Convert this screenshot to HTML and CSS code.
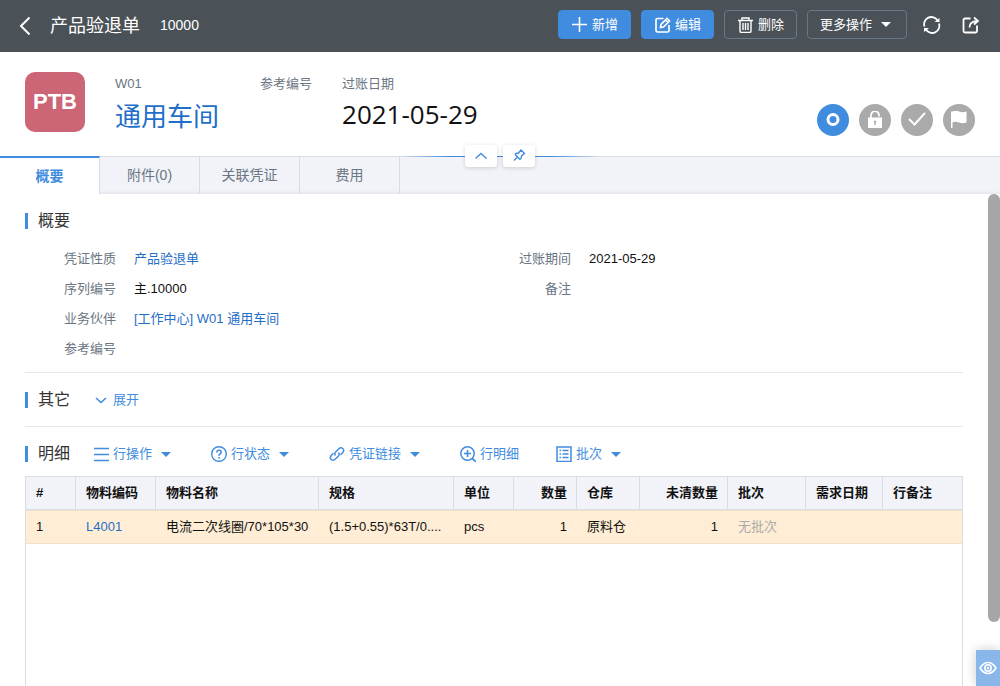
FILE: index.html
```
<!DOCTYPE html>
<html lang="zh-CN">
<head>
<meta charset="utf-8">
<meta name="viewport" content="width=device-width, initial-scale=1">
<title>产品验退单 10000</title>
<link rel="stylesheet" href="styles.css">
</head>
<body>
<header class="topbar">
  <button class="icon-btn back" aria-label="返回"><svg class="icon" viewBox="0 0 16 20"><path d="M12.500 2.500 4 11l8.500 8.500" stroke-width="2"/></svg></button>
  <h1 class="doc-title">产品验退单</h1>
  <span class="doc-no">10000</span>
  <div class="actions">
    <button class="btn primary"><svg class="icon" viewBox="0 0 16 16"><path d="M7.500 0v15M0 7.500h15" stroke-width="1.600"/></svg>新增</button>
    <button class="btn primary"><svg class="icon" viewBox="0 0 16 16"><path d="M8.500 1.500H2.500Q1 1.500 1 3v10.500Q1 15 2.500 15h10q1.500 0 1.500-1.500V8M5.500 10.500l.5-3 6-6 2.500 2.500-6 6zM10.500 3l2.500 2.500" stroke-width="1.700"/></svg>编辑</button>
    <button class="btn"><svg class="icon" viewBox="0 0 16 16"><path d="M0 3.500h15M4 3.500v-2.500h7v2.500M2 3.500V14q0 1.500 1.500 1.500h8q1.500 0 1.500-1.500V3.500M5 6v7M7.500 6v7M10 6v7" stroke-width="1.400"/></svg>删除</button>
    <button class="btn more">更多操作<span class="caret"></span></button>
  </div>
  <button class="icon-btn" aria-label="刷新"><svg class="icon" viewBox="0 0 18 18"><path d="M1.500 10.500A7.200 7.200 0 0 1 14.500 4.500M16 7.500A7.200 7.200 0 0 1 3 13.500" stroke-width="1.800"/><path d="M11.500 6h5V2zM6 12H1V16z" fill="currentColor" stroke="none"/></svg></button>
  <button class="icon-btn" aria-label="分享"><svg class="icon" viewBox="0 0 18 18"><path d="M8.500 2.500H3Q1.500 2.500 1.500 4v11q0 1.500 1.500 1.500h10.500q1.500 0 1.500-1.500V9.500M7.500 11.500Q7.500 5.500 15 5M12 1.500 16 5l-4 3.500" stroke-width="1.800"/></svg></button>
</header>

<section class="hero">
  <div class="badge">PTB</div>
  <dl class="facts">
    <div class="fact partner"><dt>W01</dt><dd><a href="#partner">通用车间</a></dd></div>
    <div class="fact"><dt>参考编号</dt><dd></dd></div>
    <div class="fact"><dt>过账日期</dt><dd class="date">2021-05-29</dd></div>
  </dl>
  <div class="statuses">
    <button class="status on" aria-label="状态"><svg class="icon" viewBox="0 0 18 18"><circle cx="9" cy="8.500" r="5" stroke-width="3"/></svg></button>
    <button class="status" aria-label="解锁"><svg class="icon" viewBox="0 0 18 18"><path d="M5 7V4.500a4 4 0 0 1 8-.5v1.500" stroke-width="1.700"/><path d="M2 6.500h14v10.500H2zM9 9.500a1.300 1.300 0 0 0-.7 2.300V14h1.400V11.800A1.300 1.300 0 0 0 9 9.500z" fill="currentColor" fill-rule="evenodd" stroke="none"/></svg></button>
    <button class="status" aria-label="审核"><svg class="icon" viewBox="0 0 18 18"><path d="m1 8 5.500 5.500L17 2" stroke-width="2"/></svg></button>
    <button class="status" aria-label="标记"><svg class="icon" viewBox="0 0 18 18"><path d="M1 .5h1.500q3-1.500 6.500 0t7.500 0v11q-4 1.500-7.500 0t-6.500 0v5.500H1z" fill="currentColor" stroke="none"/></svg></button>
  </div>
</section>

<div class="tabs-wrap">
  <nav class="tabs">
    <a class="tab active" href="#summary">概要</a>
    <a class="tab" href="#files">附件(0)</a>
    <a class="tab" href="#vouchers">关联凭证</a>
    <a class="tab" href="#fees">费用</a>
  </nav>
  <div class="handle">
    <button class="handle-btn" aria-label="收起"><svg class="icon" viewBox="0 0 16 16"><path d="m2.500 10.500 5.500-5 5.500 5" stroke-width="1.300"/></svg></button>
    <button class="handle-btn" aria-label="固定"><svg class="icon" viewBox="0 0 16 16"><path d="m9.500 1.500 4.500 4.500M10 2 7.500 5 5 5.500q-1 .5-.5 1.500l4 4q1 .5 1.500-.5L10.500 8l3-2.500M6.300 9.200 3 12.500" stroke-width="1.400"/></svg></button>
  </div>
</div>

<main class="content">
  <section class="block" id="summary">
    <div class="block-head"><h2>概要</h2></div>
    <dl class="fields">
      <div class="field"><dt>凭证性质</dt><dd><a href="#type">产品验退单</a></dd></div>
      <div class="field"><dt>过账期间</dt><dd>2021-05-29</dd></div>
      <div class="field"><dt>序列编号</dt><dd>主.10000</dd></div>
      <div class="field"><dt>备注</dt><dd></dd></div>
      <div class="field"><dt>业务伙伴</dt><dd><a href="#partner">[工作中心] W01 通用车间</a></dd></div>
      <div class="field"></div>
      <div class="field"><dt>参考编号</dt><dd></dd></div>
    </dl>
  </section>

  <section class="block">
    <div class="block-head"><h2>其它</h2>
      <button class="tool"><svg class="icon" viewBox="0 0 16 16"><path d="m3 6 5 4.500L13 6" stroke-width="1.600"/></svg>展开</button>
    </div>
  </section>

  <section class="block details">
    <div class="block-head"><h2>明细</h2>
      <button class="tool"><svg class="icon" viewBox="0 0 16 16"><path d="M1 2.500h15M1 8.500h15M1 14.500h15" stroke-width="1.600"/></svg>行操作<span class="caret"></span></button>
      <button class="tool"><svg class="icon" viewBox="0 0 16 16"><circle cx="8" cy="8" r="7.300" stroke-width="1.400"/><path d="M5.800 6.500Q5.800 4.300 8 4.300t2.200 2Q10.200 7.300 9 8T8 9.800" stroke-width="1.500"/><path d="M7.200 11h1.600v1.500H7.200z" fill="currentColor" stroke="none"/></svg>行状态<span class="caret"></span></button>
      <button class="tool"><svg class="icon" viewBox="0 0 16 16"><path d="M6.500 9.500Q5 7.500 6.800 5.700L9.800 2.700Q11.800 1 13.700 2.500T13.800 6.500L11.500 8.800M9.500 6.500Q11 8.500 9.200 10.300L6.200 13.300Q4.200 15 2.300 13.500T2.200 9.500L4.500 7.200" stroke-width="1.500"/></svg>凭证链接<span class="caret"></span></button>
      <button class="tool plain"><svg class="icon" viewBox="0 0 16 16"><circle cx="7.500" cy="7.500" r="6.700" stroke-width="1.500"/><path d="M7.500 4v7M4 7.500h7" stroke-width="1.600"/><path d="m12 12 4 4" stroke-width="1.800"/></svg>行明细</button>
      <button class="tool"><svg class="icon" viewBox="0 0 16 16"><path d="M1 1h14v14.500H1z" stroke-width="1.500"/><path d="M3.500 4.500H5M6.500 4.500h6M3.500 8H5M6.500 8h6M3.500 11.500H5M6.500 11.500h6" stroke-width="1.300"/></svg>批次<span class="caret"></span></button>
    </div>
    <div class="grid">
      <table>
        <colgroup><col class="w50"><col class="w80"><col class="w163"><col class="w135"><col class="w60"><col class="w63"><col class="w63"><col class="w88"><col class="w78"><col class="w77"><col></colgroup>
        <thead><tr><th>#</th><th>物料编码</th><th>物料名称</th><th>规格</th><th>单位</th><th class="num">数量</th><th>仓库</th><th class="num">未清数量</th><th>批次</th><th>需求日期</th><th>行备注</th></tr></thead>
        <tbody><tr><td>1</td><td><a href="#item">L4001</a></td><td>电流二次线圈/70*105*30</td><td>(1.5+0.55)*63T/0....</td><td>pcs</td><td class="num">1</td><td>原料仓</td><td class="num">1</td><td class="muted">无批次</td><td></td><td></td></tr></tbody>
      </table>
    </div>
  </section>
  <div class="scroll-thumb"></div>
  <button class="preview" aria-label="预览"><svg class="icon" viewBox="0 0 18 14"><path d="M1 7q3.500-5.500 8-5.500T17 7q-3.500 5.500-8 5.500T1 7z" stroke-width="1.600"/><circle cx="9" cy="7" r="3.200" stroke-width="1.500"/><circle cx="9" cy="7" r="1.200" fill="currentColor" stroke="none"/></svg></button>
</main>
</body>
</html>
```
FILE: styles.css
```
:root {
  --blue: #408cde;
  --link: #1f6ec8;
  --label: #6b7683;
  --line: #d8dce3;
  --panel: #f1f3f8;
}

* { box-sizing: border-box; }

body {
  margin: 0;
  height: 100vh;
  display: flex;
  flex-direction: column;
  overflow: hidden;
  background: #fff;
  color: #111;
  font: 13px/20px "Liberation Sans", "Noto Sans CJK SC", sans-serif;
}

button {
  font: inherit;
  color: inherit;
  background: none;
  border: 0;
  padding: 0;
  cursor: pointer;
}

a { color: var(--link); text-decoration: none; }
h1, h2, dl, dd { margin: 0; font-weight: normal; }

.icon {
  width: 16px;
  height: 16px;
  flex: none;
  display: block;
  fill: none;
  stroke: currentColor;
}

.caret {
  border: 5px solid transparent;
  border-top-color: currentColor;
  border-bottom: 0;
}

/* Top bar */
.topbar {
  flex: none;
  display: flex;
  align-items: center;
  height: 52px;
  padding: 0 20px 3px 17px;
  background: #4a5157;
  color: #fff;
}
.icon-btn { margin-left: 21px; }
.icon-btn .icon { width: 18px; height: 18px; }
.icon-btn.back { margin-left: 0; }
.icon-btn.back .icon { width: 16px; height: 20px; }
.doc-title { margin-left: 17px; font-size: 18px; line-height: 30px; padding-top: 3px; }
.doc-no { margin-left: 20px; padding-top: 1px; font-size: 14px; }
.actions { margin-left: auto; display: flex; gap: 10px; }
.actions + .icon-btn { margin-left: 16px; }
.btn {
  display: flex;
  align-items: center;
  gap: 4px;
  height: 29px;
  padding: 0 12px 0 13px;
  border: 1px solid #677889;
  border-radius: 4px;
}
.btn.primary { background: var(--blue); border-color: var(--blue); }
.btn.more { gap: 9px; padding: 0 15px 0 12px; }

/* Document summary */
.hero {
  flex: none;
  display: flex;
  align-items: flex-start;
  padding: 20px 25px 18px;
}
.badge {
  width: 60px;
  line-height: 60px;
  border-radius: 10px;
  background: #cc6677;
  color: #fff;
  font-size: 22px;
  font-weight: bold;
  text-align: center;
}
.facts { display: flex; gap: 30px; margin-left: 30px; }
.fact dt { margin-top: 2px; color: var(--label); }
.fact dd { margin-top: 2px; font-size: 26px; line-height: 42px; }
.fact .date { font-family: "Open Sans", sans-serif; line-height: 36px; }
.partner { min-width: 115px; }
.statuses { display: flex; gap: 10px; margin: 32px 0 0 auto; }
.status {
  width: 32px;
  height: 32px;
  display: grid;
  place-items: center;
  border-radius: 50%;
  background: #aaa;
  color: #fff;
}
.status .icon { width: 18px; height: 18px; }
.status.on { background: var(--blue); }

/* Tabs */
.tabs-wrap { flex: none; position: relative; }
.tabs {
  display: flex;
  height: 38px;
  background: var(--panel);
  border-top: 1px solid var(--line);
  box-shadow: inset 0 -3px 3px -2px #dfe1e5;
}
.tab {
  width: 100px;
  border-right: 1px solid var(--line);
  color: var(--label);
  font-size: 14px;
  line-height: 36px;
  text-align: center;
}
.tab.active {
  margin-top: -1px;
  border-top: 2px solid var(--blue);
  background: #fff;
  color: var(--blue);
  font-weight: bold;
}
.handle {
  position: absolute;
  top: -11px;
  left: 50%;
  width: 200px;
  transform: translateX(-50%);
  display: flex;
  justify-content: center;
  gap: 6px;
  background: linear-gradient(90deg, transparent, var(--blue) 25%, var(--blue) 75%, transparent) 0 11px / 100% 1px no-repeat;
}
.handle-btn {
  width: 32px;
  height: 22px;
  display: grid;
  place-items: center;
  border-radius: 3px;
  background: #fff;
  color: var(--blue);
  box-shadow: 0 1px 4px rgba(0, 0, 0, .16);
}

/* Content */
.content {
  position: relative;
  flex: 1;
  min-height: 0;
  display: flex;
  flex-direction: column;
  padding: 0 37px 0 25px;
}
.block {
  flex: none;
  min-height: 54px;
  padding: 12px 0 8px;
  border-bottom: 1px solid #e6e8eb;
}
.block-head {
  display: flex;
  align-items: center;
  height: 30px;
  color: var(--blue);
}
.block-head h2 {
  margin-right: 23px;
  padding-left: 10px;
  border-left: 3px solid var(--blue);
  color: #333;
  font-size: 16px;
  line-height: 16px;
}
.fields {
  display: grid;
  grid-template-columns: 1fr 1fr;
  margin-top: 8px;
  padding-right: 28px;
}
.field { display: flex; gap: 18px; line-height: 30px; }
.field dt { width: 91px; color: var(--label); text-align: right; }
.tool { display: flex; align-items: center; gap: 4px; margin-right: 40px; }
.tool .caret { margin-left: 5px; }
.tool.plain { margin-right: 37px; }

.details {
  flex: 1;
  min-height: 0;
  display: flex;
  flex-direction: column;
  padding-bottom: 0;
  border-bottom: 0;
}
.details .block-head { flex: none; }
.grid {
  flex: 1;
  margin-top: 7px;
  border: 1px solid var(--line);
  border-bottom: 0;
}
table { width: 100%; table-layout: fixed; border-collapse: separate; border-spacing: 0; }
th, td { padding: 0 9px 0 10px; text-align: left; white-space: nowrap; }
th {
  height: 33px;
  background: var(--panel);
  border-right: 1px solid var(--line);
  border-bottom: 1px solid var(--line);
}
th:last-child { border-right: 0; }
td {
  height: 34px;
  background: #ffeed5;
  border: solid #f3e2c8;
  border-width: 1px 0;
  padding-right: 10px;
}
th.num, td.num { text-align: right; }
td.muted { color: #aaa; }
.w50 { width: 50px; }
.w60 { width: 60px; }
.w63 { width: 63px; }
.w77 { width: 77px; }
.w78 { width: 78px; }
.w80 { width: 80px; }
.w88 { width: 88px; }
.w135 { width: 135px; }
.w163 { width: 163px; }

.scroll-thumb {
  position: absolute;
  top: 0;
  right: 0;
  width: 12px;
  height: 87%;
  border-radius: 6px;
  background: #a6a6a6;
}
.preview {
  position: absolute;
  right: 0;
  bottom: 0;
  width: 24px;
  height: 36px;
  display: grid;
  place-items: center;
  background: #8ab7ea;
  color: #fff;
  box-shadow: 0 0 12px rgba(0, 0, 0, .2);
}
.preview .icon { width: 18px; height: 14px; }
```
